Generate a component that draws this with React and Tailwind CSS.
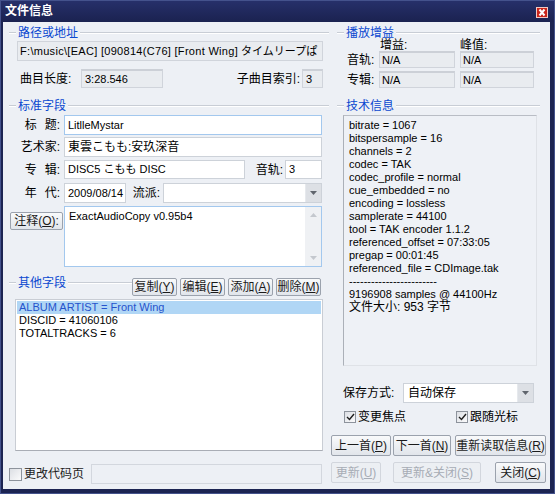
import React from "react";

const FONT = "font-['Liberation_Sans','Noto_Sans_CJK_SC',sans-serif]";

function Header({ title, left = "ml-[1px] w-[7px]", right = "mr-0", h = "h-[14px]", mt = "mt-0", lead = "leading-[14px]" }) {
  return (
    <div className={`flex items-center ${h} ${mt}`}>
      <div className={`h-[2px] border-t border-[#c8cdd5] ${left}`} style={{ borderBottomWidth: 1, borderBottomColor: "#fff" }} />
      <span className={`px-[2px] text-[12px] ${lead} text-[#0a48d0] whitespace-nowrap`}>{title}</span>
      <div className={`h-[2px] flex-1 border-t border-[#c8cdd5] ${right}`} style={{ borderBottomWidth: 1, borderBottomColor: "#fff" }} />
    </div>
  );
}

function U({ c }) {
  return <span className="underline underline-offset-[1px]">{c}</span>;
}

function Btn({ children, className = "", disabled }) {
  return (
    <div
      className={`flex items-center justify-center rounded-[2px] border text-[12px] leading-[14px] whitespace-nowrap ${
        disabled
          ? "border-[#d2d6dd] text-[#a7acb5] bg-[#eceff3]"
          : "border-[#9ba2ad] text-[#1b1b1b] bg-linear-to-b from-[#f9fafb] to-[#e1e5eb]"
      } ${className}`}
    >
      {children}
    </div>
  );
}

function Field({ children, className = "", blue }) {
  return (
    <div
      className={`bg-white border ${blue ? "border-[#a3c8ee]" : "border-[#cdd2d9]"} flex items-center pl-[3px] text-[11px] whitespace-nowrap overflow-hidden ${className}`}
    >
      {children}
    </div>
  );
}

function ROBox({ children, className = "" }) {
  return (
    <div className={`bg-[#e9ecf0] border border-[#d0d4db] border-t-2 border-t-[#ccd0d7] flex items-center pl-[2px] text-[11px] whitespace-nowrap overflow-hidden ${className}`}>
      {children}
    </div>
  );
}

function Arrow({ up }) {
  return (
    <svg width="7" height="4" viewBox="0 0 7 4">
      {up ? <path d="M0 4 L3.5 0 L7 4 Z" fill="currentColor" /> : <path d="M0 0 L7 0 L3.5 4 Z" fill="currentColor" />}
    </svg>
  );
}

function Combo({ children, className = "" }) {
  return (
    <div className={`bg-white border border-[#cdd2d9] flex items-stretch ${className}`}>
      <div className="flex-1 flex items-center pl-[4px] text-[12px] whitespace-nowrap overflow-hidden">{children}</div>
      <div className="w-[16px] bg-[#dde0e5] border-l border-[#e6e9ed] flex items-center justify-center text-[#60656d]">
        <Arrow />
      </div>
    </div>
  );
}

function Check({ checked, className = "" }) {
  return (
    <div className={`border border-[#8d939c] bg-linear-to-br from-[#dcdfe4] to-[#fbfbfc] flex items-center justify-center ${className}`}>
      {checked && (
        <svg width="9" height="8" viewBox="0 0 9 8">
          <path d="M1 4 L3.5 6.5 L8 1" fill="none" stroke="#1e1e1e" strokeWidth="1.4" />
        </svg>
      )}
    </div>
  );
}

const techLines = [
  "bitrate = 1067",
  "bitspersample = 16",
  "channels = 2",
  "codec = TAK",
  "codec_profile = normal",
  "cue_embedded = no",
  "encoding = lossless",
  "samplerate = 44100",
  "tool = TAK encoder 1.1.2",
  "referenced_offset = 07:33:05",
  "pregap = 00:01:45",
  "referenced_file = CDImage.tak",
  "------------------------",
  "9196908 samples @ 44100Hz",
  "文件大小: 953 字节",
];

export default function App() {
  return (
    <div className={`w-[555px] h-[494px] bg-[#1c2452] border border-[#44528c] flex flex-col overflow-hidden text-black ${FONT}`}>
      {/* Title bar */}
      <div className="h-[21px] flex items-start justify-between bg-linear-to-b from-[#26306a] to-[#1b2250]">
        <span className="ml-[4px] mt-[3px] text-[12px] leading-[14px] font-bold text-white">文件信息</span>
        <svg className="mt-[6px] mr-[6px]" width="12" height="11" viewBox="0 0 12 11">
          <rect x="0.5" y="0.5" width="11" height="10" fill="#c9241b" stroke="#f1c9c4" />
          <path d="M3.5 2.5 L8.5 8.5 M8.5 2.5 L3.5 8.5" stroke="#ffffff" strokeWidth="2" />
        </svg>
      </div>

      {/* Body */}
      <div className="flex-1 ml-[2px] mr-[4px] mb-[4px] bg-[#edf0f5] flex pl-[5px] pr-[4px]">
        {/* Left column */}
        <div className="w-[321px] flex flex-col">
          <Header title="路径或地址" mt="mt-[4px]" />
          <div className="mt-[1px] ml-[9px] w-[306px] h-[20px] bg-[#e9ecf0] border border-[#d0d4db] flex items-center pl-[2px] text-[11px] whitespace-nowrap overflow-hidden">
            <span className="tracking-[0.3px]">F:\music\[EAC] [090814(C76] [Front Wing]</span>
            <span className="ml-[3px] text-[11px]">タイムリープぱ</span>
          </div>
          <div className="mt-[8px] h-[19px] flex items-center">
            <span className="ml-[12px] w-[61px] text-[12px]">曲目长度:</span>
            <ROBox className="w-[82px] h-[19px] pl-[3px]">3:28.546</ROBox>
            <span className="flex-1 text-right pr-[2px] text-[12px]">子曲目索引:</span>
            <ROBox className="w-[21px] h-[19px] pl-[3px]">3</ROBox>
            <div className="w-[6px]" />
          </div>

          <Header title="标准字段" mt="mt-[11px]" />
          <div className="mt-[2px] h-[20px] flex items-center">
            <span className="w-[56px] text-right pr-[4px] text-[12px]">
              标<span className="inline-block w-[8px]" />题:
            </span>
            <Field blue className="w-[258px] h-[20px]">LitlleMystar</Field>
          </div>
          <div className="mt-[2px] h-[20px] flex items-center">
            <span className="w-[56px] text-right pr-[4px] text-[12px]">艺术家:</span>
            <Field className="w-[258px] h-[20px] text-[12px]">東雲こもも:安玖深音</Field>
          </div>
          <div className="mt-[3px] h-[19px] flex items-center">
            <span className="w-[56px] text-right pr-[4px] text-[12px]">
              专<span className="inline-block w-[8px]" />辑:
            </span>
            <Field className="w-[181px] h-[19px]">DISC5 こもも DISC</Field>
            <span className="w-[40px] text-right pr-[2px] text-[12px]">音轨:</span>
            <Field className="w-[37px] h-[19px]">3</Field>
          </div>
          <div className="mt-[4px] h-[20px] flex items-center">
            <span className="w-[56px] text-right pr-[4px] text-[12px]">
              年<span className="inline-block w-[8px]" />代:
            </span>
            <Field className="w-[62px] h-[20px]">2009/08/14</Field>
            <span className="w-[37px] text-right pr-[3px] text-[12px]">流派:</span>
            <Combo className="w-[159px] h-[20px]" />
          </div>
          <div className="mt-[3px] h-[61px] flex items-start">
            <Btn className="ml-[2px] mt-[6px] w-[53px] h-[18px]">
              注释(<U c="O" />):
            </Btn>
            <div className="ml-[1px] w-[258px] h-[61px] bg-white border border-[#a3c8ee] flex">
              <div className="flex-1 pl-[4px] pt-[3px] text-[11px] leading-[13px]">ExactAudioCopy v0.95b4</div>
              <div className="w-[16px] bg-[#eff1f4] flex flex-col items-center justify-between py-[6px] text-[#c4c8ce]">
                <Arrow up />
                <Arrow />
              </div>
            </div>
          </div>

          <div className="mt-[9px] h-[20px] flex items-start">
            <div className="flex-1">
              <Header title="其他字段" />
            </div>
            <div className="mt-[2px] flex gap-[3px] mr-[8px]">
              <Btn className="w-[45px] h-[18px]">复制(<U c="Y" />)</Btn>
              <Btn className="w-[45px] h-[18px]">编辑(<U c="E" />)</Btn>
              <Btn className="w-[45px] h-[18px]">添加(<U c="A" />)</Btn>
              <Btn className="w-[45px] h-[18px]">删除(<U c="M" />)</Btn>
            </div>
          </div>
          <div className="mt-[3px] ml-[7px] w-[308px] h-[152px] bg-white border border-[#c9cdd4] border-b-[#a9adb5] pt-px px-px text-[11px] leading-[13px]">
            <div className="bg-[#b0d6f5] text-[#2653cc] pl-[2px]">ALBUM ARTIST = Front Wing</div>
            <div className="pl-[2px]">DISCID = 41060106</div>
            <div className="pl-[2px]">TOTALTRACKS = 6</div>
          </div>

          <div className="mt-[13px] h-[20px] flex items-center">
            <Check className="ml-[1px] w-[13px] h-[13px]" />
            <span className="ml-[2px] w-[67px] text-[12px] text-[#222]">更改代码页</span>
            <div className="w-[231px] h-[20px] border border-[#d3d7de] bg-[#edf0f5]" />
          </div>
        </div>

        {/* Right column */}
        <div className="ml-[2px] w-[215px] flex flex-col">
          <Header title="播放增益" left="ml-[6px] w-[7px]" right="mr-[6px]" h="h-[13px]" mt="mt-[4px]" lead="leading-[12px]" />
          <div className="h-[12px] flex items-center text-[12px] leading-[12px]">
            <span className="ml-[49px] w-[80px]">增益:</span>
            <span>峰值:</span>
          </div>
          <div className="h-[17px] flex items-center">
            <span className="ml-[16px] w-[32px] text-[12px] leading-[14px]">音轨:</span>
            <ROBox className="w-[76px] h-[17px]">N/A</ROBox>
            <ROBox className="ml-[5px] w-[74px] h-[17px]">N/A</ROBox>
          </div>
          <div className="mt-[3px] h-[17px] flex items-center">
            <span className="ml-[16px] w-[32px] text-[12px] leading-[14px]">专辑:</span>
            <ROBox className="w-[76px] h-[17px]">N/A</ROBox>
            <ROBox className="ml-[5px] w-[74px] h-[17px]">N/A</ROBox>
          </div>

          <Header title="技术信息" left="ml-[6px] w-[7px]" right="mr-[6px]" mt="mt-[11px]" />
          <div className="mt-[2px] ml-[12px] w-[194px] h-[251px] bg-[#eef1f6] border border-[#dfe2e7] border-l-[#abb0b8] border-t-[#b9bdc5] pl-[5px] pt-[3px] text-[11px] leading-[13px] whitespace-nowrap overflow-hidden">
            {techLines.map((l, i) => (
              <div key={i} className={i === 14 ? "text-[12px]" : ""}>{l}</div>
            ))}
          </div>

          <div className="mt-[17px] h-[20px] flex items-center">
            <span className="ml-[12px] w-[60px] text-[12px]">保存方式:</span>
            <Combo className="w-[131px] h-[20px]">自动保存</Combo>
          </div>
          <div className="mt-[7px] h-[13px] flex items-center text-[12px]">
            <div className="ml-[13px] w-[112px] flex items-center">
              <Check checked className="w-[12px] h-[12px]" />
              <span className="ml-[2px]">变更焦点</span>
            </div>
            <Check checked className="w-[12px] h-[12px]" />
            <span className="ml-[2px]">跟随光标</span>
          </div>
          <div className="mt-[12px] h-[21px] flex">
            <Btn className="w-[60px] h-[21px]">上一首(<U c="P" />)</Btn>
            <Btn className="ml-[2px] w-[58px] h-[21px]">下一首(<U c="N" />)</Btn>
            <Btn className="ml-[4px] w-[91px] h-[21px]">重新读取信息(<U c="R" />)</Btn>
          </div>
          <div className="mt-[6px] h-[21px] flex">
            <Btn disabled className="w-[50px] h-[21px]">更新(<U c="U" />)</Btn>
            <Btn disabled className="ml-[12px] w-[88px] h-[21px]">更新&amp;关闭(<U c="S" />)</Btn>
            <Btn className="ml-[14px] w-[51px] h-[21px]">关闭(<U c="C" />)</Btn>
          </div>
        </div>
      </div>
    </div>
  );
}
